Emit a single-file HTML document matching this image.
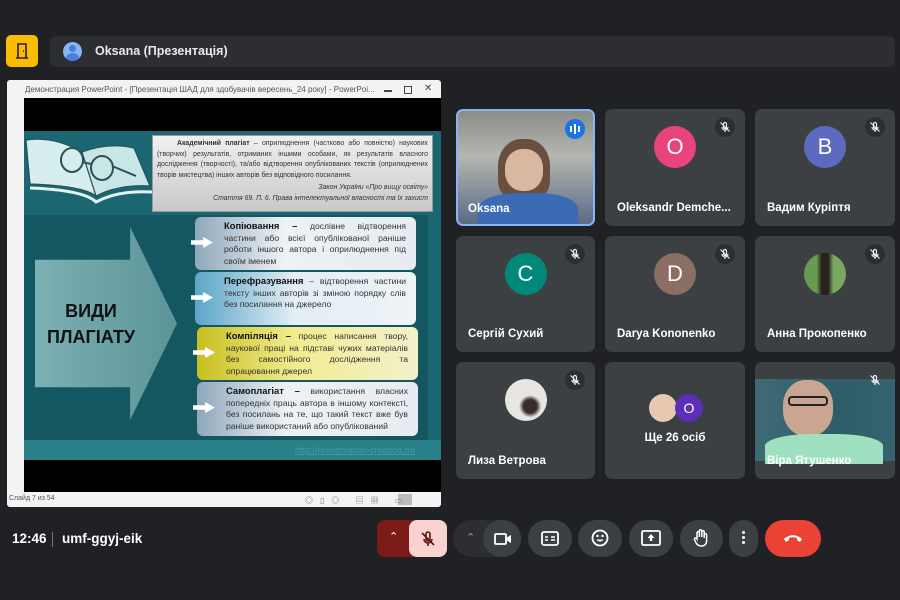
<!DOCTYPE html>
<html><head><meta charset="utf-8"><style>
*{margin:0;padding:0;box-sizing:border-box}
body{width:900px;height:600px;background:#202124;position:relative;overflow:hidden;font-family:"Liberation Sans","Noto Sans CJK SC",sans-serif;color:#e8eaed}
.abs{position:absolute}
.tile{position:absolute;background:#3c4043;border-radius:7px;overflow:hidden}
.tile .nm{position:absolute;left:12px;bottom:12px;font-size:11.5px;color:#fff;font-weight:bold;white-space:nowrap}
.av{position:absolute;width:42px;height:42px;border-radius:50%;left:50%;top:17px;margin-left:-21px;color:#fff;font-size:22px;text-align:center;line-height:42px}
.mute{position:absolute;right:10px;top:8px;width:20px;height:20px;border-radius:50%;background:#2d2e31}
.mute svg{position:absolute;left:4px;top:4px}
.btn{position:absolute;top:520px;height:37px;background:#3c4043;border-radius:19px}
.box{position:absolute;border-radius:6px;font-size:8.6px;line-height:11.6px;color:#333;padding:3px 10px 0 29px;text-align:justify}
.box b{color:#111;font-size:9.4px}
.wa{position:absolute;left:-4px;width:22px;height:11px;top:20px;background:#fff;clip-path:polygon(0 30%,55% 30%,55% 0,100% 50%,55% 100%,55% 70%,0 70%)}
</style></head><body>
<svg width="0" height="0" style="position:absolute"><defs><g id="mm"><path d="M6 1.5a1.5 1.5 0 0 1 1.5 1.5v3a1.5 1.5 0 0 1-3 0V3A1.5 1.5 0 0 1 6 1.5zM3 6a3 3 0 0 0 6 0M6 9v2M1.5 1.5l9 9" stroke="#e8eaed" stroke-width="1.2" fill="none"/></g></defs></svg>
<!-- header -->
<div class="abs" style="left:6px;top:35px;width:32px;height:32px;background:#fbbc04;border-radius:5px"></div>
<svg class="abs" style="left:14px;top:42px" width="16" height="18" viewBox="0 0 16 18"><path d="M2 16h12M4 16V2h8v14M9 9h1" stroke="#202124" stroke-width="1.6" fill="none"/></svg>
<div class="abs" style="left:50px;top:36px;width:845px;height:31px;background:#2d2e31;border-radius:6px"></div>
<div class="abs" style="left:63px;top:42px;width:19px;height:19px;border-radius:50%;background:#8ab4f8;overflow:hidden"><div style="position:absolute;left:6px;top:3px;width:7px;height:7px;border-radius:50%;background:#4a7fd6"></div><div style="position:absolute;left:3px;top:11px;width:13px;height:10px;border-radius:50%;background:#4a7fd6"></div></div>
<div class="abs" style="left:95px;top:44px;font-size:12.5px;font-weight:bold;color:#e8eaed">Oksana (Презентація)</div>

<!-- presentation window -->
<div class="abs" style="left:7px;top:80px;width:434px;height:427px;background:#f3f3f3;border-radius:3px"></div>
<div class="abs" style="left:25px;top:85px;font-size:8px;color:#555;white-space:nowrap">Демонстрация PowerPoint - [Презентація ШАД для здобувачів вересень_24 року] - PowerPoi...</div>
<div class="abs" style="left:384px;top:90px;width:8px;height:1.5px;background:#444"></div>
<div class="abs" style="left:404px;top:86px;width:8px;height:8px;border:1px solid #444"></div>
<div class="abs" style="left:424px;top:83px;font-size:10px;color:#444">✕</div>
<div class="abs" style="left:24px;top:98px;width:417px;height:394px;background:#000"></div>
<div class="abs" style="left:24px;top:131px;width:417px;height:329px;background:#1a6771"></div>
<div class="abs" style="left:24px;top:215px;width:404px;height:225px;background:#145760"></div>
<div class="abs" style="left:24px;top:440px;width:417px;height:20px;background:#2a8088"></div>
<div class="abs" style="left:295px;top:445px;font-size:9px;color:#3f9aa2;text-decoration:underline">http://presentation-creation.ru/</div>
<!-- book -->
<svg class="abs" style="left:24px;top:134px" width="130" height="80" viewBox="0 0 130 80">
<path d="M2 6 Q30 2 58 18 L72 62 Q60 52 6 50 Z" fill="#d6eeee" stroke="#2b5157" stroke-width="1.2"/>
<path d="M58 18 Q85 8 110 14 L126 52 Q95 50 72 62 Z" fill="#c8e6e6" stroke="#2b5157" stroke-width="1.2"/>
<path d="M6 54 Q60 56 72 68 Q95 56 128 58" fill="none" stroke="#e0f4f4" stroke-width="3"/>
<ellipse cx="48" cy="26" rx="11" ry="12" fill="none" stroke="#2b5157" stroke-width="2"/>
<ellipse cx="78" cy="34" rx="11" ry="12" fill="none" stroke="#2b5157" stroke-width="2"/>
<path d="M58 28 L67 30 M88 32 L112 42" stroke="#2b5157" stroke-width="2"/>
</svg>
<!-- quote -->
<div class="abs" style="left:152px;top:135px;width:281px;height:77px;background:linear-gradient(#f0f0f0,#c9c9c9);border:1px solid #999;font-size:6.9px;line-height:10.5px;color:#333;padding:3px 4px;text-align:justify">
<span style="padding-left:20px"><b>Академічний плагіат</b></span> – оприлюднення (частково або повністю) наукових (творчих) результатів, отриманих іншими особами, як результатів власного дослідження (творчості), та/або відтворення опублікованих текстів (оприлюднених творів мистецтва) інших авторів без відповідного посилання.
<div style="text-align:right;font-style:italic;margin-top:2px">Закон України «Про вищу освіту»<br>Стаття 69. П. 6. Права інтелектуальної власності та їх захист</div></div>
<!-- arrow -->
<div class="abs" style="left:35px;top:227px;width:142px;height:193px;background:linear-gradient(90deg,#7bb0b4,#5b9498);clip-path:polygon(0 17%,67% 17%,67% 0,100% 50%,67% 100%,67% 83%,0 83%)"></div>
<div class="abs" style="left:46px;top:298px;font-size:18px;font-weight:bold;color:#111;line-height:26px;text-align:center;width:90px">ВИДИ<br>ПЛАГІАТУ</div>
<!-- boxes -->
<div class="box" style="left:195px;top:217px;width:221px;height:53px;background:linear-gradient(90deg,#8ea7bb,#eef1f5 40%,#e6ecf1)"><div class="wa"></div><b>Копіювання –</b> дослівне відтворення частини або всієї опублікованої раніше роботи іншого автора і оприлюднення під своїм іменем</div>
<div class="box" style="left:195px;top:272px;width:221px;height:53px;background:linear-gradient(90deg,#5ba5c7,#e3eef5 45%,#eef3f6)"><div class="wa"></div><b>Перефразування</b> – відтворення частини тексту інших авторів зі зміною порядку слів без посилання на джерело</div>
<div class="box" style="left:197px;top:327px;width:221px;height:53px;background:linear-gradient(90deg,#c8c020,#f2ec90 45%,#f3f1cd)"><div class="wa"></div><b>Компіляція –</b> процес написання твору, наукової праці на підставі чужих матеріалів без самостійного дослідження та опрацювання джерел</div>
<div class="box" style="left:197px;top:382px;width:221px;height:54px;background:linear-gradient(90deg,#8ea7bb,#eef1f5 40%,#e6ecf1)"><div class="wa"></div><b>Самоплагіат –</b> використання власних попередніх праць автора в іншому контексті, без посилань на те, що такий текст вже був раніше використаний або опублікований</div>
<div class="abs" style="left:9px;top:495px;font-size:7px;color:#555">Слайд 7 из 54</div>
<div class="abs" style="left:398px;top:494px;width:14px;height:11px;background:#bbb"></div>
<div class="abs" style="left:305px;top:495px;font-size:8px;color:#777;letter-spacing:7px">◎▯◎ ▤▦ ▭</div>

<!-- tiles -->
<div class="tile" style="left:456px;top:109px;width:139px;height:117px;border:2px solid #8ab4f8;background:linear-gradient(#8a8d88,#b4b6b0 40%,#5b6a86)">
<div style="position:absolute;left:40px;top:28px;width:52px;height:60px;border-radius:45% 45% 30% 30%;background:#6a4e3e"></div>
<div style="position:absolute;left:47px;top:38px;width:38px;height:42px;border-radius:45%;background:#d9b7a0"></div>
<div style="position:absolute;left:20px;top:82px;width:100px;height:40px;border-radius:40% 40% 0 0;background:#3c6bb5"></div>
<div style="position:absolute;right:8px;top:8px;width:20px;height:20px;border-radius:50%;background:#1a73e8"><div style="position:absolute;left:5px;top:7px;width:2px;height:6px;background:#fff;box-shadow:4px -2px 0 0 #fff,8px 0 0 #fff"></div><div style="position:absolute;left:9px;top:5px;width:2px;height:10px;background:#fff"></div></div>
<div class="nm" style="left:10px;bottom:9px">Oksana</div></div>
<div class="tile" style="left:605px;top:109px;width:140px;height:117px"><div class="mute"><svg width="12" height="12"><use href="#mm"/></svg></div><div class="av" style="background:#e8437a">O</div><div class="nm">Oleksandr Demche...</div></div>
<div class="tile" style="left:755px;top:109px;width:140px;height:117px"><div class="mute"><svg width="12" height="12"><use href="#mm"/></svg></div><div class="av" style="background:#5c6bc0">B</div><div class="nm">Вадим Куріптя</div></div>
<div class="tile" style="left:456px;top:236px;width:139px;height:116px"><div class="mute"><svg width="12" height="12"><use href="#mm"/></svg></div><div class="av" style="background:#00897b">C</div><div class="nm">Сергій Сухий</div></div>
<div class="tile" style="left:605px;top:236px;width:140px;height:116px"><div class="mute"><svg width="12" height="12"><use href="#mm"/></svg></div><div class="av" style="background:#8d6e63">D</div><div class="nm">Darya Kononenko</div></div>
<div class="tile" style="left:755px;top:236px;width:140px;height:116px"><div class="mute"><svg width="12" height="12"><use href="#mm"/></svg></div><div class="av" style="background:linear-gradient(90deg,#6a9a50 30%,#2a201c 42%,#2a201c 58%,#7aa860 70%)"></div><div class="nm">Анна Прокопенко</div></div>
<div class="tile" style="left:456px;top:362px;width:139px;height:117px"><div class="mute"><svg width="12" height="12"><use href="#mm"/></svg></div><div class="av" style="background:radial-gradient(circle at 60% 65%,#3a2a28 18%,#e8e6e2 30%)"></div><div class="nm">Лиза Ветрова</div></div>
<div class="tile" style="left:605px;top:362px;width:140px;height:117px">
<div style="position:absolute;left:44px;top:32px;width:28px;height:28px;border-radius:50%;background:#e8c8b0"></div>
<div style="position:absolute;left:70px;top:32px;width:28px;height:28px;border-radius:50%;background:#5b2fb8;color:#fff;text-align:center;line-height:28px;font-size:14px">O</div>
<div class="nm" style="left:0;width:140px;text-align:center;top:70px">Ще 26 осіб</div></div>
<div class="tile" style="left:755px;top:362px;width:140px;height:117px">
<div style="position:absolute;left:0;top:17px;width:140px;height:82px;background:linear-gradient(90deg,#3f6b75,#2e5c68 60%,#356470)"></div>
<div style="position:absolute;left:28px;top:18px;width:50px;height:56px;border-radius:45%;background:#c9a592"></div>
<div style="position:absolute;left:33px;top:34px;width:40px;height:10px;border:2px solid #222;border-radius:4px"></div>
<div style="position:absolute;left:10px;top:72px;width:118px;height:30px;border-radius:40% 40% 0 0;background:#9fe0c0"></div>
<div class="mute" style="background:transparent"><svg width="12" height="12"><use href="#mm"/></svg></div>
<div class="nm">Віра Ятушенко</div></div>

<!-- bottom -->
<div class="abs" style="left:12px;top:531px;font-size:13.5px;font-weight:bold;color:#fff">12:46</div>
<div class="abs" style="left:52px;top:532px;width:1px;height:15px;background:#777"></div>
<div class="abs" style="left:62px;top:531px;font-size:13.5px;font-weight:bold;color:#fff">umf-ggyj-eik</div>
<div class="btn" style="left:377px;width:50px;background:#7b1a16;border-radius:8px 0 0 8px"></div>
<div class="abs" style="left:389px;top:530px;font-size:11px;color:#fff">⌃</div>
<div class="btn" style="left:409px;width:38px;background:#fad2cf;border-radius:8px"></div>
<svg class="abs" style="left:418px;top:529px" width="20" height="20" viewBox="0 0 20 20"><path d="M10 3a2 2 0 0 1 2 2v5a2 2 0 0 1-4 0V5a2 2 0 0 1 2-2zM6 10a4 4 0 0 0 8 0M10 14v3M4 4l12 12" stroke="#5c1410" stroke-width="1.6" fill="none"/></svg>
<div class="btn" style="left:453px;width:68px;background:#2d2e31"></div>
<div class="abs" style="left:466px;top:531px;font-size:11px;color:#999">⌃</div>
<div class="btn" style="left:483px;width:38px;"></div>
<svg class="abs" style="left:493px;top:530px" width="20" height="18" viewBox="0 0 20 18"><rect x="2" y="4" width="11" height="10" rx="1" stroke="#fff" stroke-width="1.8" fill="none"/><path d="M13 8l5-3v8l-5-3z" fill="#fff"/></svg>
<div class="btn" style="left:528px;width:44px"></div>
<svg class="abs" style="left:541px;top:531px" width="18" height="15" viewBox="0 0 18 15"><rect x="1" y="1" width="16" height="13" rx="2" stroke="#fff" stroke-width="1.8" fill="none"/><path d="M4 6h3M4 9h3M10 6h4M10 9h4" stroke="#fff" stroke-width="1.5"/></svg>
<div class="btn" style="left:578px;width:44px"></div>
<svg class="abs" style="left:591px;top:529px" width="18" height="18" viewBox="0 0 18 18"><circle cx="9" cy="9" r="7.5" stroke="#fff" stroke-width="1.8" fill="none"/><circle cx="6.5" cy="7" r="1.2" fill="#fff"/><circle cx="11.5" cy="7" r="1.2" fill="#fff"/><path d="M5.5 10.5a4 4 0 0 0 7 0z" fill="#fff"/></svg>
<div class="btn" style="left:629px;width:44px"></div>
<svg class="abs" style="left:641px;top:530px" width="20" height="16" viewBox="0 0 20 16"><rect x="1" y="1" width="18" height="14" rx="1.5" stroke="#fff" stroke-width="1.8" fill="none"/><path d="M10 4l-3.5 4h2.3v3h2.4V8h2.3z" fill="#fff"/></svg>
<div class="btn" style="left:680px;width:43px"></div>
<svg class="abs" style="left:692px;top:528px" width="18" height="20" viewBox="0 0 18 20"><path d="M5 11V5a1.2 1.2 0 0 1 2.4 0v4V3a1.2 1.2 0 0 1 2.4 0v6V4a1.2 1.2 0 0 1 2.4 0v6V7a1.2 1.2 0 0 1 2.4 0v6c0 3-2 5-5 5s-4-1-5.5-3L2.5 11.5a1.2 1.2 0 0 1 2-1.2z" stroke="#fff" stroke-width="1.5" fill="none"/></svg>
<div class="btn" style="left:729px;width:29px"></div>
<div class="abs" style="left:742px;top:531px;width:3px;height:3px;background:#fff;border-radius:50%;box-shadow:0 5px 0 #fff,0 10px 0 #fff"></div>
<div class="btn" style="left:765px;width:56px;background:#ea4335"></div>
<svg class="abs" style="left:782px;top:532px" width="22" height="12" viewBox="0 0 22 12"><path d="M2 7c5-5 13-5 18 0l-2 3-3-2V6c-3-1-5-1-8 0v2l-3 2z" fill="#fff"/></svg>
</body></html>
